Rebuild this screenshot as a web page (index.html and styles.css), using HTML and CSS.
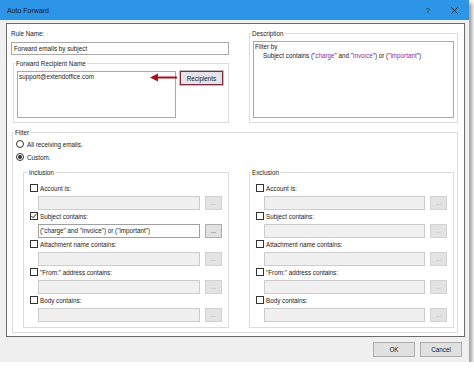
FILE: index.html
```html
<!DOCTYPE html>
<html>
<head>
  <title>Auto Forward</title>
  <link rel="stylesheet" href="styles.css">
</head>
<body>
  <div class="dialog">
    <div class="titlebar">
      <span class="title">Auto Forward</span>
      <span class="tb-btn">?</span>
      <span class="tb-btn close"><svg width="7" height="7" viewBox="0 0 7 7"><path d="M0.5 0.5 L6.5 6.5 M6.5 0.5 L0.5 6.5" stroke="#1a1a1a" stroke-width="0.9"/></svg></span>
    </div>

    <div class="client">
      <div class="panel">
        <div class="top-row">
          <div class="left-col">
            <div class="label">Rule Name:</div>
            <div class="textbox single">Forward emails by subject</div>
            <fieldset class="group recipient-group">
              <legend>Forward Recipient Name</legend>
              <div class="recipient-row">
                <div class="textbox recipient-box">support@extendoffice.com</div>
                <!-- annotation arrow -->
                <svg class="arrow" width="27" height="9" viewBox="0 0 27 9"><path d="M0 4.5 L8 0.5 L8 8.5 Z" fill="#a3121b"/><path d="M7 4.5 L27 4.5" stroke="#a3121b" stroke-width="2"/></svg>
                <button type="button" class="btn recipients-btn">Recipients</button>
              </div>
            </fieldset>
          </div>

          <fieldset class="group desc-group">
            <legend>Description</legend>
            <div class="textbox desc-box">
              <div>Filter by</div>
              <div class="indent">Subject contains ("<span class="val">charge</span>" and "<span class="val">invoice</span>") or ("<span class="val">important</span>")</div>
            </div>
          </fieldset>
        </div>

        <fieldset class="group filter-group">
          <legend>Filter</legend>
          <div class="filter-body">
            <div class="radio-row"><span class="radio"></span>All receiving emails.</div>
            <div class="radio-row"><span class="radio checked"></span>Custom.</div>

            <div class="cond-grid">
              <fieldset class="group cond-group">
                <legend class="legend-wide">Inclusion</legend>
                <div class="cond-body">
                  <div class="check-row"><span class="check"></span>Account is:</div>
                  <div class="input-row"><div class="textbox field off"></div><span class="dots off">...</span></div>
                  <div class="check-row"><span class="check on"><svg width="8" height="8" viewBox="0 0 8 8"><path d="M1.3 3.9 L3.1 5.8 L6.7 1.6" fill="none" stroke="#222" stroke-width="1"/></svg></span>Subject contains:</div>
                  <div class="input-row"><div class="textbox field">("charge" and "invoice") or ("important")</div><span class="dots">...</span></div>
                  <div class="check-row"><span class="check"></span>Attachment name contains:</div>
                  <div class="input-row"><div class="textbox field off"></div><span class="dots off">...</span></div>
                  <div class="check-row"><span class="check"></span>"From:" address contains:</div>
                  <div class="input-row"><div class="textbox field off"></div><span class="dots off">...</span></div>
                  <div class="check-row"><span class="check"></span>Body contains:</div>
                  <div class="input-row"><div class="textbox field off"></div><span class="dots off">...</span></div>
                </div>
              </fieldset>

              <fieldset class="group cond-group">
                <legend>Exclusion</legend>
                <div class="cond-body">
                  <div class="check-row"><span class="check"></span>Account is:</div>
                  <div class="input-row"><div class="textbox field off"></div><span class="dots off">...</span></div>
                  <div class="check-row"><span class="check"></span>Subject contains:</div>
                  <div class="input-row"><div class="textbox field off"></div><span class="dots off">...</span></div>
                  <div class="check-row"><span class="check"></span>Attachment name contains:</div>
                  <div class="input-row"><div class="textbox field off"></div><span class="dots off">...</span></div>
                  <div class="check-row"><span class="check"></span>"From:" address contains:</div>
                  <div class="input-row"><div class="textbox field off"></div><span class="dots off">...</span></div>
                  <div class="check-row"><span class="check"></span>Body contains:</div>
                  <div class="input-row"><div class="textbox field off"></div><span class="dots off">...</span></div>
                </div>
              </fieldset>
            </div>
          </div>
        </fieldset>
      </div>

      <div class="footer">
        <button type="button" class="btn dlg-btn">OK</button>
        <button type="button" class="btn dlg-btn">Cancel</button>
      </div>
    </div>
  </div>
</body>
</html>
```

FILE: styles.css
```css
body {
  margin: 0;
  background-color: #ffffff;
  font-family: "Liberation Sans", Arial, sans-serif;
  font-size: 6.3px;
  color: #1a1a1a;
}

.dialog {
  width: 469px;
  background-color: #f0f0f0;
  box-shadow: 3px 3px 4px rgba(0, 0, 0, 0.4);
}

/* title bar */
.titlebar {
  height: 20px;
  background-color: #2d95e5;
  display: flex;
  align-items: center;
  padding-left: 7px;
  padding-right: 2px;
  font-size: 7px;
}

.title {
  flex: 1;
}

.tb-btn {
  width: 26px;
  display: flex;
  justify-content: center;
  align-items: center;
}

/* client area */
.client {
  padding: 3px 4px 0 6px;
}

.panel {
  background-color: #ffffff;
  border: 1px solid #6b6b6b;
  padding: 5px 6px 3px 4px;
}

.top-row {
  display: grid;
  grid-template-columns: 218px 1fr;
  column-gap: 20px;
  align-items: start;
}

.label {
  line-height: 9px;
}

.group {
  margin: 0;
  padding: 0;
  min-width: 0;
  border: 1px solid #dcdcdc;
}

.group legend {
  padding: 0 1px;
  margin-left: 1px;
  line-height: 9px;
}

.group .legend-wide {
  margin-left: 4px;
}

.textbox {
  box-sizing: border-box;
  background-color: #ffffff;
  border: 1px solid #a9a9a9;
  line-height: 9px;
  white-space: nowrap;
  overflow: hidden;
}

.textbox.single {
  margin-top: 4px;
  height: 13px;
  line-height: 11px;
  padding: 0 2px;
}

/* forward recipient */
.recipient-group {
  margin: 4px 0 0 2px;
}

.recipient-row {
  position: relative;
  display: flex;
  align-items: flex-start;
  gap: 4px;
  padding: 3px 0 4px 3px;
}

.recipient-box {
  width: 159px;
  height: 47px;
  padding: 0 1px;
}

.arrow {
  position: absolute;
  left: 136px;
  top: 5px;
}

.btn {
  font-family: inherit;
  font-size: inherit;
  color: #1a1a1a;
  padding: 0;
  box-sizing: border-box;
  background-color: #e1e1e1;
  border: 1px solid #adadad;
}

.recipients-btn {
  width: 43px;
  height: 14px;
  background-color: #e3e3ec;
  border-color: #7e2a3c;
  box-shadow: 0 0 0 1px #cdb8c0;
}

/* description */
.desc-box {
  margin: 3px 3px 4px 3px;
  height: 77px;
  padding: 0 1px;
  white-space: normal;
}

.indent {
  padding-left: 8px;
}

.val {
  color: #8c2d9c;
}

/* filter */
.filter-group {
  margin: 5px 0 0 1px;
}

.filter-body {
  padding: 2px 3px 4px 3px;
}

.radio-row {
  display: flex;
  align-items: center;
  gap: 3px;
  height: 10px;
}

.radio-row + .radio-row {
  margin-top: 3px;
}

.radio {
  width: 8px;
  height: 8px;
  box-sizing: border-box;
  border: 1px solid #333333;
  border-radius: 50%;
  display: flex;
  align-items: center;
  justify-content: center;
}

.radio.checked::after {
  content: "";
  width: 4px;
  height: 4px;
  border-radius: 50%;
  background-color: #333333;
}

.cond-grid {
  display: grid;
  grid-template-columns: 206px 1fr;
  column-gap: 20px;
  margin: 6px 0 0 7px;
}

.cond-body {
  padding: 6px 6px 5px 6px;
}

.check-row {
  display: flex;
  align-items: center;
  gap: 2px;
  height: 10px;
}

.input-row + .check-row {
  margin-top: 1px;
}

.check {
  width: 8px;
  height: 8px;
  box-sizing: border-box;
  border: 1px solid #333333;
  background-color: #ffffff;
  display: flex;
}

.check svg {
  margin: -1px;
}

.input-row {
  display: flex;
  gap: 5px;
  margin-top: 3px;
  margin-left: 8px;
  height: 14px;
}

.textbox.field {
  flex: 1;
  height: 14px;
  line-height: 12px;
  padding: 0 1px;
  border-color: #a0a0a0;
}

.textbox.field.off {
  background-color: #f0f0f0;
  border-color: #cccccc;
}

.dots {
  width: 17px;
  height: 14px;
  box-sizing: border-box;
  background-color: #e1e1e1;
  border: 1px solid #adadad;
  text-align: center;
  line-height: 11px;
  color: #333333;
}

.dots.off {
  background-color: #e3e3e3;
  border-color: #d2d2d2;
  color: #a8a8a8;
}

/* footer buttons */
.footer {
  display: flex;
  justify-content: flex-end;
  gap: 5px;
  padding: 5px 3px 5px 0;
}

.dlg-btn {
  width: 42px;
  height: 15px;
}
```
